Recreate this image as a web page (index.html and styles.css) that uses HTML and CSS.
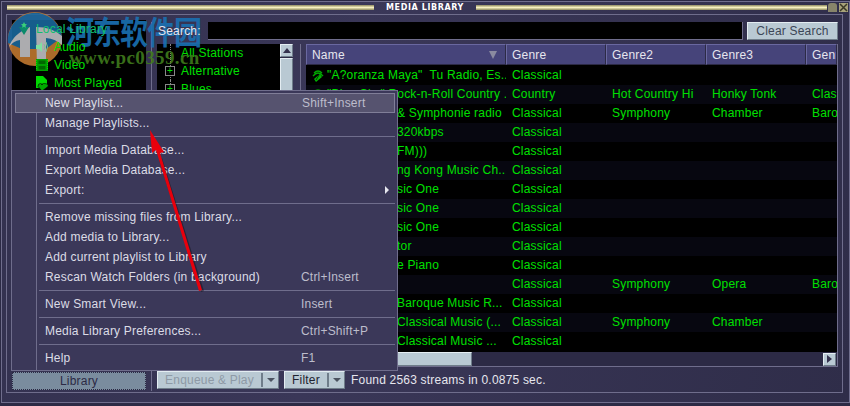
FILE: index.html
```html
<!DOCTYPE html>
<html lang="en">
<head>
<meta charset="UTF-8">
<title>Media Library</title>
<link rel="stylesheet" href="styles.css">
</head>
<body>

<div class="window">
  <div class="titlebar">
    <span class="grip grip-left"></span>
    <span class="title">MEDIA LIBRARY</span>
    <span class="grip"></span>
    <span class="win-btn win-min"></span>
    <span class="win-btn win-close">
      <svg width="9" height="9" viewBox="0 0 9 9"><path d="M1 1 8 8M8 1 1 8" stroke="#3a3826" stroke-width="1.5"/></svg>
    </span>
  </div>

  <div class="frame">
    <aside class="sidebar">
      <ul class="lib-tree">
        <li class="lib-root">
          <svg width="12" height="14" viewBox="0 0 12 14"><path d="M1 5h10L6 13z" fill="#0a8a6a"/><path d="M6 0l1 2 2 .3-1.500 1.400.4 2L6 4.800 4.100 5.700l.4-2L3 2.300 5 2z" fill="#39d07a"/></svg>
          Local Library
        </li>
        <li>
          <svg width="14" height="14" viewBox="0 0 14 14"><path d="M1 5h3l3-3v10L4 9H1z" fill="#7fe0a0"/><path d="M9 4q2 3 0 6M11 2q3 5 0 10" fill="none" stroke="#7fc090"/></svg>
          Audio
        </li>
        <li>
          <svg width="14" height="14" viewBox="0 0 14 14"><path d="M1 1h12v12H1z" fill="#00a000"/><path d="M3.500 2.500h7v3.500h-7zM3.500 8h7v3.500h-7z" fill="#006800"/><path d="M1.500 2v10M12.500 2v10" stroke="#00e000" stroke-dasharray="1 1"/></svg>
          Video
        </li>
        <li>
          <svg width="14" height="15" viewBox="0 0 14 15"><path d="M1 0h7l4 4v4H1z" fill="#00d800"/><path d="M1 8h3v4H1z" fill="#00d800"/><path d="M7 15 3 10.500Q3 7.500 5.500 7.500 7 7.500 7 9 7 7.500 8.500 7.500 14 7.500 13 10.500z" fill="#00a800" stroke="#000" stroke-width=".6"/></svg>
          Most Played
        </li>
      </ul>
      <button class="btn btn-library">Library</button>
    </aside>

    <div class="sash"></div>

    <div class="content">
      <div class="search-row">
        <label class="search-label">Search:</label>
        <div class="search-input"></div>
        <button class="btn btn-clear">Clear Search</button>
      </div>

      <div class="browser">
        <div class="stations">
          <ul class="station-tree">
            <li>All Stations</li>
            <li><span class="plus">+</span>Alternative</li>
            <li><span class="plus">+</span>Blues</li>
          </ul>
          <div class="vscroll">
            <span class="scroll-btn"><i class="tri-up"></i></span>
            <span class="vthumb"></span>
          </div>
        </div>

        <div class="sash sash-inner"></div>

        <div class="list">
          <div class="list-head">
            <div class="col col-name">Name<i class="sort-mark"></i></div>
            <div class="col">Genre</div>
            <div class="col">Genre2</div>
            <div class="col">Genre3</div>
            <div class="col col-last">Genre4</div>
          </div>

          <div class="list-body">
            <div class="row">
              <div class="cell cell-name">
                <svg class="stream-icon" width="12" height="14" viewBox="0 0 12 14"><path d="M2 4q4-4 8 0M1 7q5-6 10 0" fill="none" stroke="#00a800" stroke-width="1.300"/><path d="M8 5 2 10l2 3 6-5z" fill="#00b000"/><path d="M7 6 4 11" stroke="#003c00"/></svg>
                "A?oranza Maya"&nbsp; Tu Radio, Es...
              </div>
              <div class="cell">Classical</div><div class="cell"></div><div class="cell"></div><div class="cell"></div>
            </div>
            <div class="row">
              <div class="cell cell-name">
                <svg class="stream-icon" width="12" height="14" viewBox="0 0 12 14"><path d="M2 4q4-4 8 0M1 7q5-6 10 0" fill="none" stroke="#00a800" stroke-width="1.300"/><path d="M8 5 2 10l2 3 6-5z" fill="#00b000"/><path d="M7 6 4 11" stroke="#003c00"/></svg>
                "Blue Sky" Rock-n-Roll Country ...
              </div>
              <div class="cell">Country</div><div class="cell">Hot Country Hi</div><div class="cell">Honky Tonk</div><div class="cell">Classical</div>
            </div>
            <div class="row"><div class="cell cell-name cell-tail">&amp; Symphonie radio</div><div class="cell">Classical</div><div class="cell">Symphony</div><div class="cell">Chamber</div><div class="cell">Baroque</div></div>
            <div class="row"><div class="cell cell-name cell-tail">320kbps</div><div class="cell">Classical</div><div class="cell"></div><div class="cell"></div><div class="cell"></div></div>
            <div class="row"><div class="cell cell-name cell-tail">FM)))</div><div class="cell">Classical</div><div class="cell"></div><div class="cell"></div><div class="cell"></div></div>
            <div class="row"><div class="cell cell-name cell-tail">ng Kong Music Ch...</div><div class="cell">Classical</div><div class="cell"></div><div class="cell"></div><div class="cell"></div></div>
            <div class="row"><div class="cell cell-name cell-tail">sic One</div><div class="cell">Classical</div><div class="cell"></div><div class="cell"></div><div class="cell"></div></div>
            <div class="row"><div class="cell cell-name cell-tail">sic One</div><div class="cell">Classical</div><div class="cell"></div><div class="cell"></div><div class="cell"></div></div>
            <div class="row"><div class="cell cell-name cell-tail">sic One</div><div class="cell">Classical</div><div class="cell"></div><div class="cell"></div><div class="cell"></div></div>
            <div class="row"><div class="cell cell-name cell-tail">tor</div><div class="cell">Classical</div><div class="cell"></div><div class="cell"></div><div class="cell"></div></div>
            <div class="row"><div class="cell cell-name cell-tail">e Piano</div><div class="cell">Classical</div><div class="cell"></div><div class="cell"></div><div class="cell"></div></div>
            <div class="row"><div class="cell cell-name"></div><div class="cell">Classical</div><div class="cell">Symphony</div><div class="cell">Opera</div><div class="cell">Baroque</div></div>
            <div class="row"><div class="cell cell-name cell-tail">Baroque Music R...</div><div class="cell">Classical</div><div class="cell"></div><div class="cell"></div><div class="cell"></div></div>
            <div class="row"><div class="cell cell-name cell-tail">Classical Music (...</div><div class="cell">Classical</div><div class="cell">Symphony</div><div class="cell">Chamber</div><div class="cell"></div></div>
            <div class="row"><div class="cell cell-name cell-tail">Classical Music ...</div><div class="cell">Classical</div><div class="cell"></div><div class="cell"></div><div class="cell"></div></div>
          </div>

          <div class="hscroll">
            <span class="hthumb"></span>
            <span class="scroll-btn"><i class="tri-right"></i></span>
          </div>
        </div>
      </div>

      <div class="status-row">
        <button class="btn btn-enqueue" disabled><span class="btn-text">Enqueue &amp; Play</span><span class="btn-split"><i class="tri-down"></i></span></button>
        <button class="btn btn-filter"><span class="btn-text">Filter</span><span class="btn-split"><i class="tri-down"></i></span></button>
        <span class="status-text">Found 2563 streams in 0.0875 sec.</span>
      </div>
    </div>
  </div>

  <!-- context menu over the library -->
  <div class="menu">
    <div class="menu-item hover"><span>New Playlist...</span><span class="key">Shift+Insert</span></div>
    <div class="menu-item"><span>Manage Playlists...</span></div>
    <div class="menu-sep"></div>
    <div class="menu-item"><span>Import Media Database...</span></div>
    <div class="menu-item"><span>Export Media Database...</span></div>
    <div class="menu-item"><span>Export:</span><i class="tri-sub"></i></div>
    <div class="menu-sep"></div>
    <div class="menu-item"><span>Remove missing files from Library...</span></div>
    <div class="menu-item"><span>Add media to Library...</span></div>
    <div class="menu-item"><span>Add current playlist to Library</span></div>
    <div class="menu-item"><span>Rescan Watch Folders (in background)</span><span class="key">Ctrl+Insert</span></div>
    <div class="menu-sep"></div>
    <div class="menu-item"><span>New Smart View...</span><span class="key">Insert</span></div>
    <div class="menu-sep"></div>
    <div class="menu-item"><span>Media Library Preferences...</span><span class="key">Ctrl+Shift+P</span></div>
    <div class="menu-sep"></div>
    <div class="menu-item"><span>Help</span><span class="key">F1</span></div>
  </div>

  <!-- red annotation arrow -->
  <svg class="arrow" width="849" height="402" viewBox="1 1 849 402">
    <path d="M159 160 201 292 204 291 162 158z" fill="#000" opacity=".35"/>
    <path d="M150 130 152 153 156 150 199 291 202 290 160 153 164 152z" fill="#e8000c"/>
  </svg>

  <!-- site watermark -->
  <div class="watermark">
    <svg class="wm-logo" width="60" height="60" viewBox="0 0 60 60">
      <circle cx="29" cy="30" r="27" fill="#c47a30"/>
      <path d="M2 34A27 27 0 0 1 56 28L40 40H16z" fill="#1a6aa0"/>
      <path d="M3 38Q7 25 24 18V48H14V31Q7 32 3 38z" fill="#c4c4c8"/>
      <path d="M30 18Q46 18 56 27V36Q50 30 40 29V57H31z" fill="#c4c4c8"/>
    </svg>
    <span class="wm-cn">河东软件园</span>
    <span class="wm-url">www.pc0359.cn</span>
  </div>
</div>

</body>
</html>
```

FILE: styles.css
```css
:root {
  --panel: #3a3758;
  --panel-dark: #2c2a45;
  --line: #6f6d8c;
  --green: #00e000;
  --btn: #b9c9d3;
  --menu: #3b3859;
  --head: #46447a;
}

* {
  box-sizing: border-box;
}

html, body {
  margin: 0;
  height: 100%;
  overflow: hidden;
}

body {
  padding: 1px 0 0 1px;
  background: var(--panel-dark);
  font-family: "Liberation Sans", Arial, sans-serif;
  font-size: 12px;
  color: #e6e6ee;
}

ul {
  list-style: none;
  margin: 0;
  padding: 0;
}

.window {
  position: relative;
  width: 849px;
  height: 402px;
  border: 1px solid var(--line);
  background: linear-gradient(100deg, #33314f, #3a3758 40%, #2f2d49);
  display: flex;
  flex-direction: column;
}

/* title bar */
.titlebar {
  height: 11px;
  padding: 0 1px 0 5px;
  display: flex;
  align-items: center;
  flex: none;
}

.grip {
  flex: 1;
  height: 5px;
  background: linear-gradient(#8f8a5f, #f7f0c0 50%, #8f8a5f);
}

.grip-left {
  flex: none;
  width: 367px;
}

.title {
  width: 102px;
  text-align: center;
  font-size: 8px;
  font-weight: bold;
  letter-spacing: .6px;
  color: #fff;
  font-family: "DejaVu Sans", sans-serif;
}

.win-btn {
  width: 9px;
  height: 9px;
  margin-left: 1px;
  display: block;
  line-height: 0;
}

.win-min {
  background: #87846a;
  border-radius: 3px 3px 0 0;
}

.win-close {
  background: #a8a37a;
  margin-left: 2px;
}

/* main frame */
.frame {
  flex: 1;
  min-height: 0;
  margin: 1px 6px 9px 4px;
  padding: 7px 4px 1px 5px;
  border: 1px solid var(--line);
  display: flex;
}

.sidebar {
  width: 134px;
  margin-top: -2px;
  flex: none;
  display: flex;
  flex-direction: column;
}

.lib-tree {
  flex: 1;
  background: #000;
  color: var(--green);
  font-size: 12px;
}

.lib-tree li {
  height: 18px;
  display: flex;
  align-items: center;
  gap: 5px;
  padding-left: 23px;
  letter-spacing: .2px;
  position: relative;
  z-index: 2;
}

.lib-tree li.lib-root {
  padding-left: 6px;
  gap: 6px;
  color: #10c070;
}

.sash {
  width: 1px;
  margin: 0 5px;
  background: var(--line);
  flex: none;
}

.sash-inner {
  margin: 0 5px 0 7px;
}

.content {
  flex: 1;
  min-width: 0;
  display: flex;
  flex-direction: column;
}

/* buttons */
.btn {
  height: 18px;
  padding: 0;
  border: 1px solid;
  border-color: #e4edf2 #6f7d8a #6f7d8a #e4edf2;
  background: var(--btn);
  color: #1f2330;
  font: 12px "Liberation Sans", Arial, sans-serif;
  letter-spacing: .2px;
}

.btn-library {
  flex: none;
  width: 134px;
  margin: 2px 0 1px;
  background: #7a8c9e;
  border: 1px dotted #2c2a45;
  color: #2c2a45;
}

.btn-clear {
  width: 91px;
  color: #3c4656;
}

.btn-enqueue,
.btn-filter {
  display: flex;
  align-items: center;
}

.btn-text {
  flex: 1;
  text-align: center;
}

.btn-split {
  display: flex;
  align-items: center;
  justify-content: center;
  flex: none;
  width: 17px;
  height: 14px;
  border-left: 2px solid #6f7d8a;
}

/* search */
.search-row {
  flex: none;
  height: 18px;
  display: flex;
  align-items: center;
  gap: 4px;
}

.search-label {
  width: 47px;
  padding-left: 1px;
  letter-spacing: .2px;
  position: relative;
  z-index: 2;
}

.search-input {
  flex: 1;
  height: 18px;
  background: #000;
  border-right: 1px solid var(--line);
  border-bottom: 1px solid var(--line);
}

/* browser area */
.browser {
  flex: 1;
  min-height: 0;
  margin-top: 4px;
  display: flex;
}

.stations {
  width: 136px;
  flex: none;
  background: #000;
  display: flex;
}

.station-tree {
  flex: 1;
  color: var(--green);
  letter-spacing: .2px;
}

.station-tree li {
  height: 18px;
  display: flex;
  align-items: center;
  padding-left: 24px;
  position: relative;
}

.station-tree li::before {
  content: "";
  position: absolute;
  left: 13px;
  top: 0;
  bottom: 0;
  border-left: 1px dotted #888;
}

.plus {
  position: absolute;
  left: 8px;
  top: 4px;
  width: 10px;
  height: 10px;
  border: 1px solid #888;
  background: #000;
  font-size: 10px;
  line-height: 7px;
  text-align: center;
  z-index: 1;
}

.vscroll {
  width: 13px;
  flex: none;
  background: var(--panel-dark);
  display: flex;
  flex-direction: column;
  gap: 1px;
}

.scroll-btn {
  width: 13px;
  height: 13px;
  flex: none;
  display: flex;
  align-items: center;
  justify-content: center;
  background: var(--btn);
  border: 1px solid;
  border-color: #e4edf2 #6f7d8a #6f7d8a #e4edf2;
}

.vthumb {
  flex: 1;
  background: var(--btn);
  border: 1px solid;
  border-color: #e4edf2 #6f7d8a #6f7d8a #e4edf2;
}

.tri-up {
  border: 4px solid transparent;
  border-top: 0;
  border-bottom: 5px solid #34324e;
}

.tri-right {
  border: 4px solid transparent;
  border-right: 0;
  border-left: 5px solid #34324e;
}

.tri-down {
  border: 4px solid transparent;
  border-bottom: 0;
  border-top: 4px solid #4b5360;
}

/* list */
.list {
  flex: 1;
  min-width: 0;
  display: flex;
  flex-direction: column;
  border-right: 1px solid var(--line);
  border-bottom: 1px solid var(--line);
}

.list-head {
  flex: none;
  height: 21px;
  display: grid;
  grid-template-columns: 200px 100px 100px 100px 1fr;
  background: var(--head);
  overflow: hidden;
}

.col {
  padding-left: 5px;
  line-height: 20px;
  border-top: 1px solid #6a68a0;
  border-left: 1px solid #6a68a0;
  border-right: 1px solid #2c2a45;
  border-bottom: 1px solid #2c2a45;
  letter-spacing: .2px;
  position: relative;
  white-space: nowrap;
  overflow: hidden;
}

.sort-mark {
  position: absolute;
  right: 8px;
  top: 6px;
  border: 4px solid transparent;
  border-bottom: 0;
  border-top: 8px solid #8a8aa0;
}

.list-body {
  flex: 1;
  min-height: 0;
  padding-top: 1px;
  background: #000;
  overflow: hidden;
}

.row {
  height: 19px;
  display: grid;
  grid-template-columns: 200px 100px 100px 100px 1fr;
  color: var(--green);
  letter-spacing: .2px;
}

.row:nth-child(even) {
  background: #070710;
}

.cell {
  padding-left: 6px;
  line-height: 19px;
  white-space: nowrap;
  overflow: hidden;
}

.cell-name {
  display: flex;
  align-items: center;
  gap: 3px;
}

/* the start of these names sits behind the menu */
.cell-tail {
  padding-left: 91px;
}

.stream-icon {
  flex: none;
}

.hscroll {
  flex: none;
  height: 14px;
  background: var(--panel-dark);
  display: flex;
  align-items: center;
  justify-content: space-between;
  padding-right: 1px;
}

.hthumb {
  width: 166px;
  height: 14px;
  background: var(--btn);
  border: 1px solid;
  border-color: #e4edf2 #6f7d8a #6f7d8a #e4edf2;
}

/* bottom row */
.status-row {
  flex: none;
  height: 24px;
  padding-top: 4px;
  display: flex;
  align-items: flex-start;
  gap: 5px;
}

.btn-enqueue {
  width: 122px;
  color: #8e9aa6;
}

.btn-filter {
  width: 61px;
}

.status-text {
  padding-left: 1px;
  line-height: 18px;
  letter-spacing: .2px;
}

/* context menu */
.menu {
  position: absolute;
  left: 9px;
  top: 88px;
  width: 387px;
  height: 281px;
  padding: 2px 2px 3px 3px;
  background: linear-gradient(to right, var(--menu) 24px, #6f6d8c 24px, #6f6d8c 25px, var(--menu) 25px);
  border: 1px solid var(--line);
  color: #dcdce6;
  letter-spacing: .2px;
  z-index: 3;
}

.menu-item {
  height: 20px;
  padding: 0 0 0 30px;
  display: flex;
  align-items: center;
  position: relative;
}

.menu-item.hover {
  background: #56536f;
  border: 1px solid #807e98;
  padding-left: 29px;
}

.key {
  position: absolute;
  left: 286px;
  color: #bdbdcc;
}

.tri-sub {
  position: absolute;
  right: 6px;
  border: 4px solid transparent;
  border-right: 0;
  border-left: 4px solid #e6e6ee;
}

.menu-sep {
  height: 1px;
  margin: 3px 0 3px 24px;
  background: #6f6d8c;
}

.arrow {
  position: absolute;
  left: -1px;
  top: -1px;
  pointer-events: none;
  z-index: 4;
}

/* watermark */
.watermark {
  position: absolute;
  left: -2px;
  top: -2px;
  width: 210px;
  height: 70px;
  pointer-events: none;
}

.wm-logo {
  position: absolute;
  left: 6px;
  top: 9px;
  opacity: .88;
}

.wm-cn {
  position: absolute;
  left: 66px;
  top: 12px;
  font: bold 28px "Noto Sans CJK SC", sans-serif;
  color: #1a6fb0;
  opacity: .92;
  line-height: 36px;
  letter-spacing: -1px;
  white-space: nowrap;
  transform: scaleY(1.15);
}

.wm-url {
  position: absolute;
  left: 69px;
  top: 47px;
  font: bold 19px "Liberation Serif", serif;
  color: #3f7a1c;
  opacity: .9;
  letter-spacing: .4px;
  white-space: nowrap;
}
```
